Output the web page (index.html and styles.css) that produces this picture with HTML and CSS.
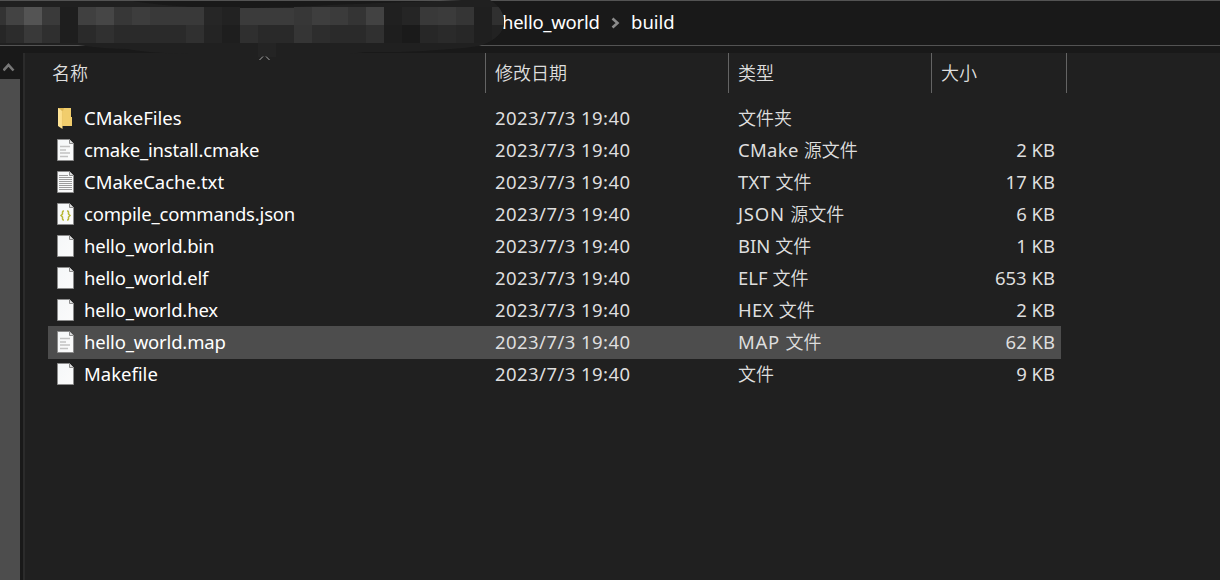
FILE: index.html
```
<!DOCTYPE html>
<html lang="zh-CN">
<head>
<meta charset="utf-8">
<title>build</title>
<link rel="stylesheet" href="styles.css">
</head>
<body>
<svg class="defs" width="0" height="0">
  <defs>
    <linearGradient id="gold" x1="0" x2="1"><stop offset="0" stop-color="#ffe59a"/><stop offset="1" stop-color="#fbdc85"/></linearGradient>
    <linearGradient id="paper" x1="0" y1="0" x2="1" y2="1"><stop offset="0" stop-color="#f5f7f8"/><stop offset="1" stop-color="#fbfbfb"/></linearGradient>
    <symbol id="page" viewBox="0 0 17 22">
      <path d="M.5.5H12.5L16.5 4.5V21.5H.5Z" fill="url(#paper)" stroke="#8c8c8c"/>
      <path d="M12.5.5V4.5H16.5" fill="#ddd" stroke="#8c8c8c"/>
    </symbol>
    <symbol id="folder" viewBox="0 0 17 22">
      <path d="M1 1H14V10H15V19H5V4L1 2Z" fill="#dfb650"/>
      <path d="M7 1H14V10H15V19H6V4Z" fill="#f1cd6c"/>
      <path d="M1 1L5.500 4V22L1 19Z" fill="url(#gold)"/>
    </symbol>
    <symbol id="script" viewBox="0 0 17 22">
      <use href="#page" width="17" height="22"/>
      <path d="M3 7.500H13M3 11H9M3 14H13M3 17.500H11" stroke="#c2c2c2" stroke-width="1.500"/>
    </symbol>
    <symbol id="text" viewBox="0 0 17 22">
      <use href="#page" width="17" height="22"/>
      <path d="M2 4.500H11M2 6.500H15M2 8.500H15M2 10.500H15M2 12.500H15M2 14.500H15M2 16.500H15M2 18.500H15" stroke="#9b9b9b"/>
    </symbol>
    <symbol id="json" viewBox="0 0 17 22">
      <use href="#page" width="17" height="22"/>
      <path d="M7 8H6.500Q5.500 8 5.500 9V11L4 12.500L5.500 14V16Q5.500 17 6.500 17H7M10 8H10.500Q11.500 8 11.500 9V11L13 12.500L11.500 14V16Q11.500 17 10.500 17H10" fill="none" stroke="#b9b936" stroke-width="1.500"/>
    </symbol>
  </defs>
</svg>
<div class="window">
  <header class="address">
    <span class="crumb first">hello_world</span>
    <svg class="sep" width="9" height="12" viewBox="0 0 9 12"><path d="M1.500 1.500L6.500 6L1.500 10.500" fill="none" stroke="#8a8a8a" stroke-width="2.600"/></svg>
    <span class="crumb last">build</span>
  </header>
  <svg class="mosaic" width="510" height="62" viewBox="0 0 510 62">
    <path d="M0 1H120L133 1Q160 6 215 8Q280 8 330 5Q400 2 440 1L462 0H490Q504 8 504 23Q503 38 479 46Q450 50 400 52H365L350 54H190Q145 53 128 49Q105 49 78 45H0Z" fill="#202020"/>
    <g clip-path="url(#blob)" shape-rendering="crispEdges">
      <path d="M0 7h6v18H0z" fill="#333"/><path d="M6 7h18v18H6z" fill="#434343"/><path d="M24 7h18v18H24z" fill="#545454"/><path d="M42 7h18v18H42z" fill="#3a3a3a"/><path d="M60 7h18v36H60z" fill="#1e1e1e"/><path d="M78 7h18v18H78z" fill="#404040"/><path d="M96 7h18v18H96z" fill="#464646"/><path d="M114 7h18v18h-18z" fill="#373737"/><path d="M132 7h18v18h-18z" fill="#3d3d3d"/><path d="M150 7h54v18h-54z" fill="#393939"/><path d="M204 7h18v18h-18z" fill="#262626"/><path d="M222 7h18v18h-18z" fill="#222"/><path d="M240 8h54v17h-54z" fill="#3b3b3b"/><path d="M294 7h18v18h-18z" fill="#373737"/><path d="M312 7h18v18h-18z" fill="#3e3e3e"/><path d="M330 7h18v18h-18z" fill="#3b3b3b"/><path d="M348 7h18v18h-18z" fill="#343434"/><path d="M366 7h18v18h-18z" fill="#424242"/><path d="M384 7h18v18h-18z" fill="#202020"/><path d="M402 7h18v18h-18z" fill="#252525"/><path d="M420 7h18v18h-18z" fill="#393939"/><path d="M438 7h18v18h-18z" fill="#3b3b3b"/><path d="M456 7h18v18h-18z" fill="#353535"/><path d="M474 7h18v36h-18z" fill="#1f1f1f"/><path d="M492 7h12v18h-12z" fill="#303030"/>
      <path d="M0 25h6v18H0z" fill="#262626"/><path d="M6 25h18v18H6z" fill="#2c2c2c"/><path d="M24 25h18v18H24z" fill="#393939"/><path d="M42 25h18v18H42z" fill="#2f2f2f"/><path d="M78 25h18v18H78z" fill="#2a2a2a"/><path d="M96 25h18v18H96z" fill="#303030"/><path d="M114 25h72v18h-72z" fill="#2a2a2a"/><path d="M186 25h18v18h-18z" fill="#303030"/><path d="M204 25h18v18h-18z" fill="#242424"/><path d="M222 25h18v18h-18z" fill="#1e1e1e"/><path d="M240 25h18v18h-18z" fill="#2f2f2f"/><path d="M258 25h36v18h-36z" fill="#292929"/><path d="M294 25h18v18h-18z" fill="#353535"/><path d="M312 25h18v18h-18z" fill="#2d2d2d"/><path d="M330 25h36v18h-36z" fill="#2a2a2a"/><path d="M366 25h18v18h-18z" fill="#303030"/><path d="M384 25h18v18h-18z" fill="#1e1e1e"/><path d="M402 25h18v18h-18z" fill="#1a1a1a"/><path d="M420 25h18v18h-18z" fill="#272727"/><path d="M438 25h18v18h-18z" fill="#2a2a2a"/><path d="M456 25h18v18h-18z" fill="#272727"/><path d="M492 25h12v18h-12z" fill="#222"/>
      <path d="M258 43h18v14h-18z" fill="#242424"/>
    </g>
    <path d="M259.500 60L263 56.500M266 56.500L269.500 60" stroke="#a8a8a8" fill="none"/>
    <clipPath id="blob"><path d="M0 0H490Q504 8 504 23Q503 38 479 46V62H0Z"/></clipPath>
  </svg>
  <div class="body">
    <aside class="scroll">
      <svg class="up" width="12" height="10" viewBox="0 0 12 10"><path d="M.500 8.500L5.500 3L10.500 8.500" fill="none" stroke="#777" stroke-width="2.600"/></svg>
      <div class="thumb"></div>
    </aside>
    <main class="list">
      <div class="head"><span class="h name">名称</span><span class="h">修改日期</span><span class="h">类型</span><span class="h">大小</span></div>
      <div class="rows">
        <div class="row"><svg class="icon"><use href="#folder"/></svg><span class="file caps">CMakeFiles</span><span class="date">2023/7/3 19:40</span><span class="type"><b>文件夹</b></span><span class="size"></span></div>
        <div class="row"><svg class="icon"><use href="#script"/></svg><span class="file">cmake_install.cmake</span><span class="date">2023/7/3 19:40</span><span class="type wide">CMake <b>源文件</b></span><span class="size">2 KB</span></div>
        <div class="row"><svg class="icon"><use href="#text"/></svg><span class="file caps">CMakeCache.txt</span><span class="date">2023/7/3 19:40</span><span class="type wide">TXT <b>文件</b></span><span class="size">17 KB</span></div>
        <div class="row"><svg class="icon"><use href="#json"/></svg><span class="file">compile_commands.json</span><span class="date">2023/7/3 19:40</span><span class="type wider">JSON <b>源文件</b></span><span class="size">6 KB</span></div>
        <div class="row"><svg class="icon"><use href="#page"/></svg><span class="file">hello_world.bin</span><span class="date">2023/7/3 19:40</span><span class="type">BIN <b>文件</b></span><span class="size">1 KB</span></div>
        <div class="row"><svg class="icon"><use href="#page"/></svg><span class="file">hello_world.elf</span><span class="date">2023/7/3 19:40</span><span class="type">ELF <b>文件</b></span><span class="size">653 KB</span></div>
        <div class="row"><svg class="icon"><use href="#page"/></svg><span class="file">hello_world.hex</span><span class="date">2023/7/3 19:40</span><span class="type wide">HEX <b>文件</b></span><span class="size">2 KB</span></div>
        <div class="row hover"><svg class="icon"><use href="#script"/></svg><span class="file">hello_world.map</span><span class="date">2023/7/3 19:40</span><span class="type wider">MAP <b>文件</b></span><span class="size">62 KB</span></div>
        <div class="row"><svg class="icon"><use href="#page"/></svg><span class="file caps">Makefile</span><span class="date">2023/7/3 19:40</span><span class="type"><b>文件</b></span><span class="size">9 KB</span></div>
      </div>
    </main>
  </div>
</div>
</body>
</html>
```
FILE: styles.css
```
* { box-sizing: border-box; }
body { margin: 0; background: #202020; font-family: "Noto Sans", "Noto Sans CJK SC", sans-serif; font-size: 18.5px; color: #dedede; overflow: hidden; }
.defs { position: absolute; }
.window { position: relative; width: 1220px; height: 580px; display: flex; flex-direction: column; background: #191919; }
.address { height: 46px; flex: none; display: flex; align-items: center; padding-left: 502px; border-top: 1px solid #535353; border-bottom: 1px solid #535353; color: #fff; }
.crumb { line-height: 42px; height: 44px; white-space: nowrap; }
.first { width: 98px; letter-spacing: -.25px; }
.sep { margin: 0 11px 0 11px; }
.mosaic { position: absolute; left: 0; top: 0; }
.body { flex: 1; display: flex; padding-top: 7px; }
.scroll { width: 25px; display: flex; flex-direction: column; border-right: 2px solid #2b2b2b; }
.up { margin: 9px 0 7px 3px; flex: none; }
.thumb { width: 20px; flex: 1; background: #4d4d4d; }
.list { flex: 1; background: #202020; padding-left: 23px; }
.head { display: grid; grid-template-columns: 438px 243px 203px 135px; height: 40px; font-family: "Noto Sans CJK SC", sans-serif; font-weight: 350; font-size: 18px; }
.h { border-right: 1px solid #646464; padding-left: 9px; line-height: 38px; }
.name { padding-left: 4px; }
.rows { padding-top: 9px; }
.row { display: grid; grid-template-columns: 36px 411px 243px 203px 114px; grid-template-rows: 32px; width: 1013px; height: 32px; line-height: 32px; align-items: center; white-space: nowrap; }
.row.hover { height: 33px; margin-bottom: -1px; background: #4d4d4d; }
.icon { width: 17px; height: 22px; margin-left: 9px; }
.file { color: #fff; letter-spacing: -.18px; }
.file.caps { letter-spacing: 0; }
.date { letter-spacing: .44px; }
.type.wide { letter-spacing: .3px; }
.type.wider { letter-spacing: .75px; }
.type b { font-family: "Noto Sans CJK SC", sans-serif; font-weight: 350; font-size: 18px; line-height: 1; letter-spacing: 0; }
.size { text-align: right; }
```
